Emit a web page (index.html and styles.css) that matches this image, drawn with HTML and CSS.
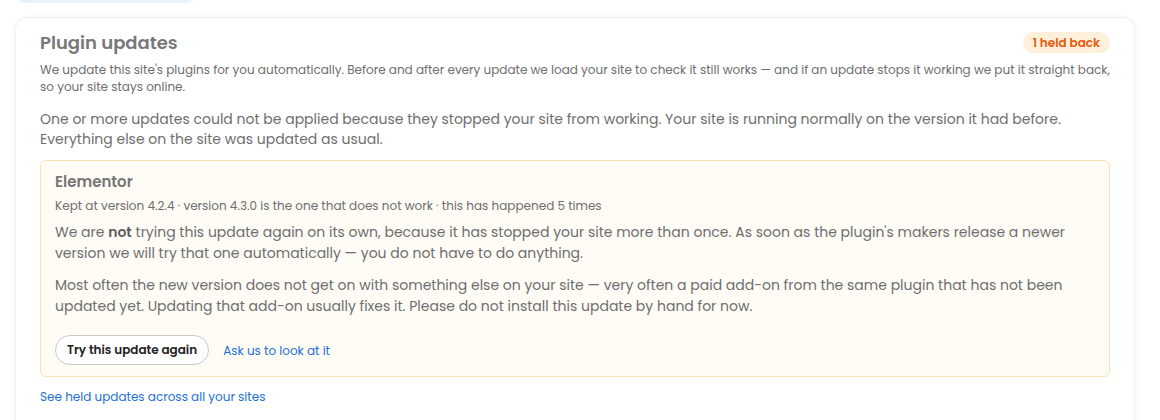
FILE: index.html
```html
<!DOCTYPE html>
<html lang="en">
<head>
<meta charset="utf-8">
<title>Plugin updates</title>
<link rel="stylesheet" href="styles.css">
</head>
<body>
<div class="page">
  <div class="top-tab"></div>
  <section class="card">
    <header class="card-head">
      <h2 class="card-title">Plugin updates</h2>
      <span class="badge">1 held back</span>
    </header>
    <p class="intro">We update this site's plugins for you automatically. Before and after every update we load your site to check it still works — and if an update stops it working we put it straight back, so your site stays online.</p>
    <p class="summary">One or more updates could not be applied because they stopped your site from working. Your site is running normally on the version it had before. Everything else on the site was updated as usual.</p>
    <div class="held">
      <h3 class="held-name">Elementor</h3>
      <p class="held-meta">Kept at version 4.2.4 · version 4.3.0 is the one that does not work · this has happened 5 times</p>
      <p class="held-text">We are <strong>not</strong> trying this update again on its own, because it has stopped your site more than once. As soon as the plugin's makers release a newer version we will try that one automatically — you do not have to do anything.</p>
      <p class="held-text second">Most often the new version does not get on with something else on your site — very often a paid add-on from the same plugin that has not been updated yet. Updating that add-on usually fixes it. Please do not install this update by hand for now.</p>
      <div class="actions">
        <button class="btn" type="button">Try this update again</button>
        <a class="link" href="#">Ask us to look at it</a>
      </div>
    </div>
    <a class="link footer-link" href="#">See held updates across all your sites</a>
  </section>
</div>
</body>
</html>
```

FILE: styles.css
```css
* { box-sizing: border-box; }
html, body { margin: 0; padding: 0; background: #ffffff; }
body {
  font-family: Poppins, "Noto Sans", "Open Sans", sans-serif;
  color: #6e6e6e;
  overflow: hidden;
}
.page {
  padding: 0 25px 0 15px;
}
.top-tab {
  width: 178px;
  height: 30px;
  margin: -27px 0 0 1px;
  background: #e8f2fd;
  border-radius: 8px;
}
.card {
  margin-top: 14px;
  width: 1120px;
  border: 1px solid #f0f0f0;
  border-radius: 12px;
  background: #fff;
  box-shadow: 0 1px 6px rgba(0, 0, 0, 0.06);
  padding: 13px 24px 40px 24px;
}
.card-head {
  display: flex;
  align-items: center;
  justify-content: space-between;
  height: 24px;
}
.card-title {
  margin: 0;
  font-size: 18px;
  line-height: 24px;
  font-weight: 600;
  color: #787878;
}
.badge {
  background: #fff0dc;
  color: #e65a0b;
  font-size: 12px;
  font-weight: 600;
  line-height: 21px;
  padding: 0 10px;
  border-radius: 11px;
  margin-top: -1px;
}
.intro {
  margin: 6px 0 0;
  font-size: 12px;
  line-height: 17px;
}
.summary {
  margin: 14px 0 0;
  font-size: 14px;
  line-height: 20px;
}
.held {
  margin-top: 11px;
  background: #fffcf6;
  border: 1px solid #fbe1b2;
  border-radius: 6px;
  padding: 11px 14px 11px;
}
.held-name {
  margin: 0;
  font-size: 15px;
  line-height: 20px;
  font-weight: 600;
  color: #767676;
}
.held-meta {
  margin: 5px 0 0;
  font-size: 12px;
  line-height: 17px;
}
.held-text {
  margin: 8px 0 0;
  font-size: 14px;
  line-height: 21px;
}
.held-text strong { font-weight: 600; color: #5c5c5c; }
.held-text.second { margin-top: 11px; }
.actions {
  margin-top: 18px;
  display: flex;
  align-items: center;
  gap: 14px;
}
.btn {
  font-family: inherit;
  font-size: 12px;
  font-weight: 600;
  color: #222;
  background: #fff;
  border: 1px solid #c9c9c9;
  border-radius: 15px;
  height: 30px;
  padding: 0 11px;
  cursor: pointer;
}
.link {
  color: #2371d4;
  text-decoration: none;
  font-size: 12px;
  line-height: 17px;
}
.footer-link {
  display: inline-block;
  margin-top: 11px;
}
```
